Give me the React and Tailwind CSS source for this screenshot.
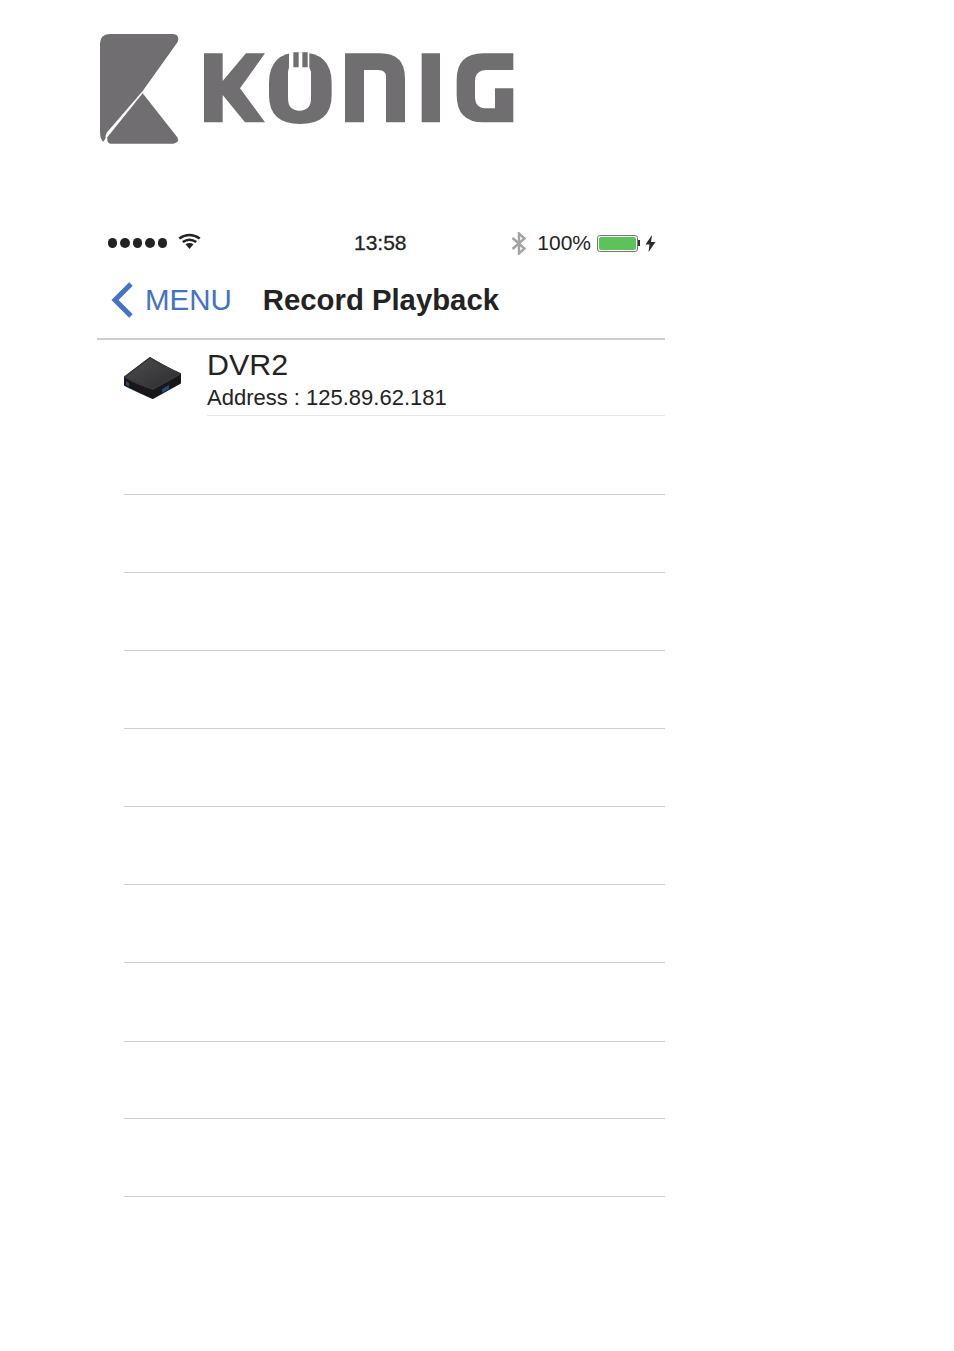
import React from "react";

const font = { fontFamily: '"Liberation Sans", Arial, sans-serif' };

function Logo() {
  return (
    <svg width="440" height="135" viewBox="0 0 1320 405" className="block" fill="#716e72">
      <path d="M58 42 H250 Q270 44 263 66 L158 213 L50 338 Q46 345 46 356 L40 365 Q30 358 30 335 V70 Q30 44 58 42 Z" />
      <path d="M158 220 L262 352 Q270 368 250 371 H62 Q50 371 52 352 Z" />
      <path d="M342 100 H398 V183 L468 100 H525 L450 205 L525 307 H465 L398 225 V307 H342 Z" />
      <path d="M630 97 Q725 97 725 190 V225 Q725 312 630 312 Q537 312 537 225 V190 Q537 97 630 97 Z" />
      <path fill="#fff" d="M597 97 H658 V142 L663 155 V235 Q663 272 628 272 Q594 272 594 235 V155 L597 142 Z" />
      <path d="M610 97 H626 V142 H610 Z M637 97 H653 V142 H637 Z" />
      <path d="M765 100 H870 Q945 100 945 175 V307 H888 V170 Q888 150 865 150 H822 V307 H765 Z" />
      <path d="M995 100 H1050 V307 H995 Z" />
      <path d="M1180 100 H1270 V150 H1190 Q1155 150 1155 185 V230 Q1155 265 1190 265 H1215 V205 H1270 V307 H1180 Q1100 307 1100 225 V180 Q1100 100 1180 100 Z" />
    </svg>
  );
}

function Wifi() {
  return (
    <svg width="23" height="17" viewBox="0 0 23 17" className="ml-[11px] -mt-[3px]" fill="#232323">
      <path d="M0.5 4.5 Q11.5 -3 22.5 4.5 L21 6.5 Q11.5 0 2 6.5 Z" />
      <path d="M4 8 Q11.5 3 19 8 L17.5 10 Q11.5 6 5.5 10 Z" />
      <path d="M7.5 11.2 Q11.5 8.6 15.5 11.2 L11.5 16 Z" />
    </svg>
  );
}

function Bluetooth() {
  return (
    <svg width="16" height="23" viewBox="0 0 16 23" fill="none" stroke="#a3a3a5" strokeWidth="2.4">
      <path d="M1.5 6 L13.5 16.5 L8 21.5 V1.5 L13.5 6.5 L1.5 17" />
    </svg>
  );
}

function Battery() {
  return (
    <div className="flex items-center">
      <div className="w-[41px] h-[17px] rounded-[3px] border border-[#77777a] bg-white p-[1px]">
        <div className="w-full h-full rounded-[2px] bg-[#5dc25a]" />
      </div>
      <div className="w-[2px] h-[6px] bg-[#333]" />
    </div>
  );
}

function Bolt() {
  return (
    <svg width="11" height="17" viewBox="0 0 11 17" fill="#2a2a2a">
      <path d="M7 0 L0.5 9.5 H4.5 L3.5 17 L10.5 7 H6 Z" />
    </svg>
  );
}

function Dvr() {
  return (
    <svg width="60" height="44" viewBox="0 0 60 44" className="block">
      <defs>
        <linearGradient id="top" x1="0" y1="0" x2="1" y2="1">
          <stop offset="0" stopColor="#4e4c4e" />
          <stop offset="1" stopColor="#2c2b2d" />
        </linearGradient>
      </defs>
      <path d="M2 21 L27 2 Q40 10 57 18 V27 L30 42 Q14 35 2 29 Z" fill="#18181a" stroke="#18181a" strokeWidth="2" strokeLinejoin="round" />
      <path d="M2 21 L27 2 Q40 10 57 18 L30 33 Q14 28 2 21 Z" fill="url(#top)" stroke="#3a393b" strokeWidth="1.5" strokeLinejoin="round" />
      <path d="M3 25 L6 27 V31 L3 29 Z" fill="#27487c" />
      <path d="M39 33 L46 29 V33 L39 37 Z" fill="#27487c" />
    </svg>
  );
}

export default function App() {
  const rows = [79, 78, 78, 78, 78, 78, 78, 79, 77, 78];
  return (
    <div className="relative w-full min-h-[1351px] bg-white text-[#232323]" style={font}>
      <div className="pt-[20px] pl-[90px]">
        <Logo />
      </div>
      <div className="ml-[97px] mt-[73px] w-[568px]">
        <div className="flex items-center h-[30px] pl-[11px] pr-[9px]">
          <div className="flex items-center w-[246px]">
            <div className="flex gap-[3px]">
              {[0, 1, 2, 3, 4].map((i) => (
                <span key={i} className="block w-[9.4px] h-[9.4px] rounded-full bg-[#232323]" />
              ))}
            </div>
            <Wifi />
          </div>
          <div className="text-[21px] leading-[30px] [-webkit-text-stroke:0.3px]">13:58</div>
          <div className="flex items-center ml-auto">
            <Bluetooth />
            <span className="ml-[10px] text-[21px] leading-[30px]">100%</span>
            <span className="ml-[6px]"><Battery /></span>
            <span className="ml-[5px]"><Bolt /></span>
          </div>
        </div>
        <div className="flex items-center h-[82px] pl-[14px] pt-[4px] border-b-2 border-[#cfcfcf]">
          <svg width="22" height="36" viewBox="0 0 22 36" fill="none" stroke="#4472c4" strokeWidth="5" className="-mt-[1px]">
            <path d="M20 2 L4 18 L20 34" />
          </svg>
          <span className="ml-[12px] text-[29.5px] leading-none text-[#4472c4]">MENU</span>
          <span className="ml-[31px] text-[29.3px] leading-none font-bold">Record Playback</span>
        </div>
        <div className="flex h-[76px]">
          <div className="w-[110px] pl-[26px] pt-[16px] shrink-0">
            <Dvr />
          </div>
          <div className="flex-1 border-b border-[#e6e6e6]">
            <div className="text-[30.4px] leading-[34px] mt-[7px]">DVR2</div>
            <div className="text-[22px] leading-[26px] mt-[4px]">Address : 125.89.62.181</div>
          </div>
        </div>
        <div className="ml-[27px]">
          {rows.map((h, i) => (
            <div key={i} className="border-b border-[#cfcfcf]" style={{ height: h }} />
          ))}
        </div>
      </div>
    </div>
  );
}
